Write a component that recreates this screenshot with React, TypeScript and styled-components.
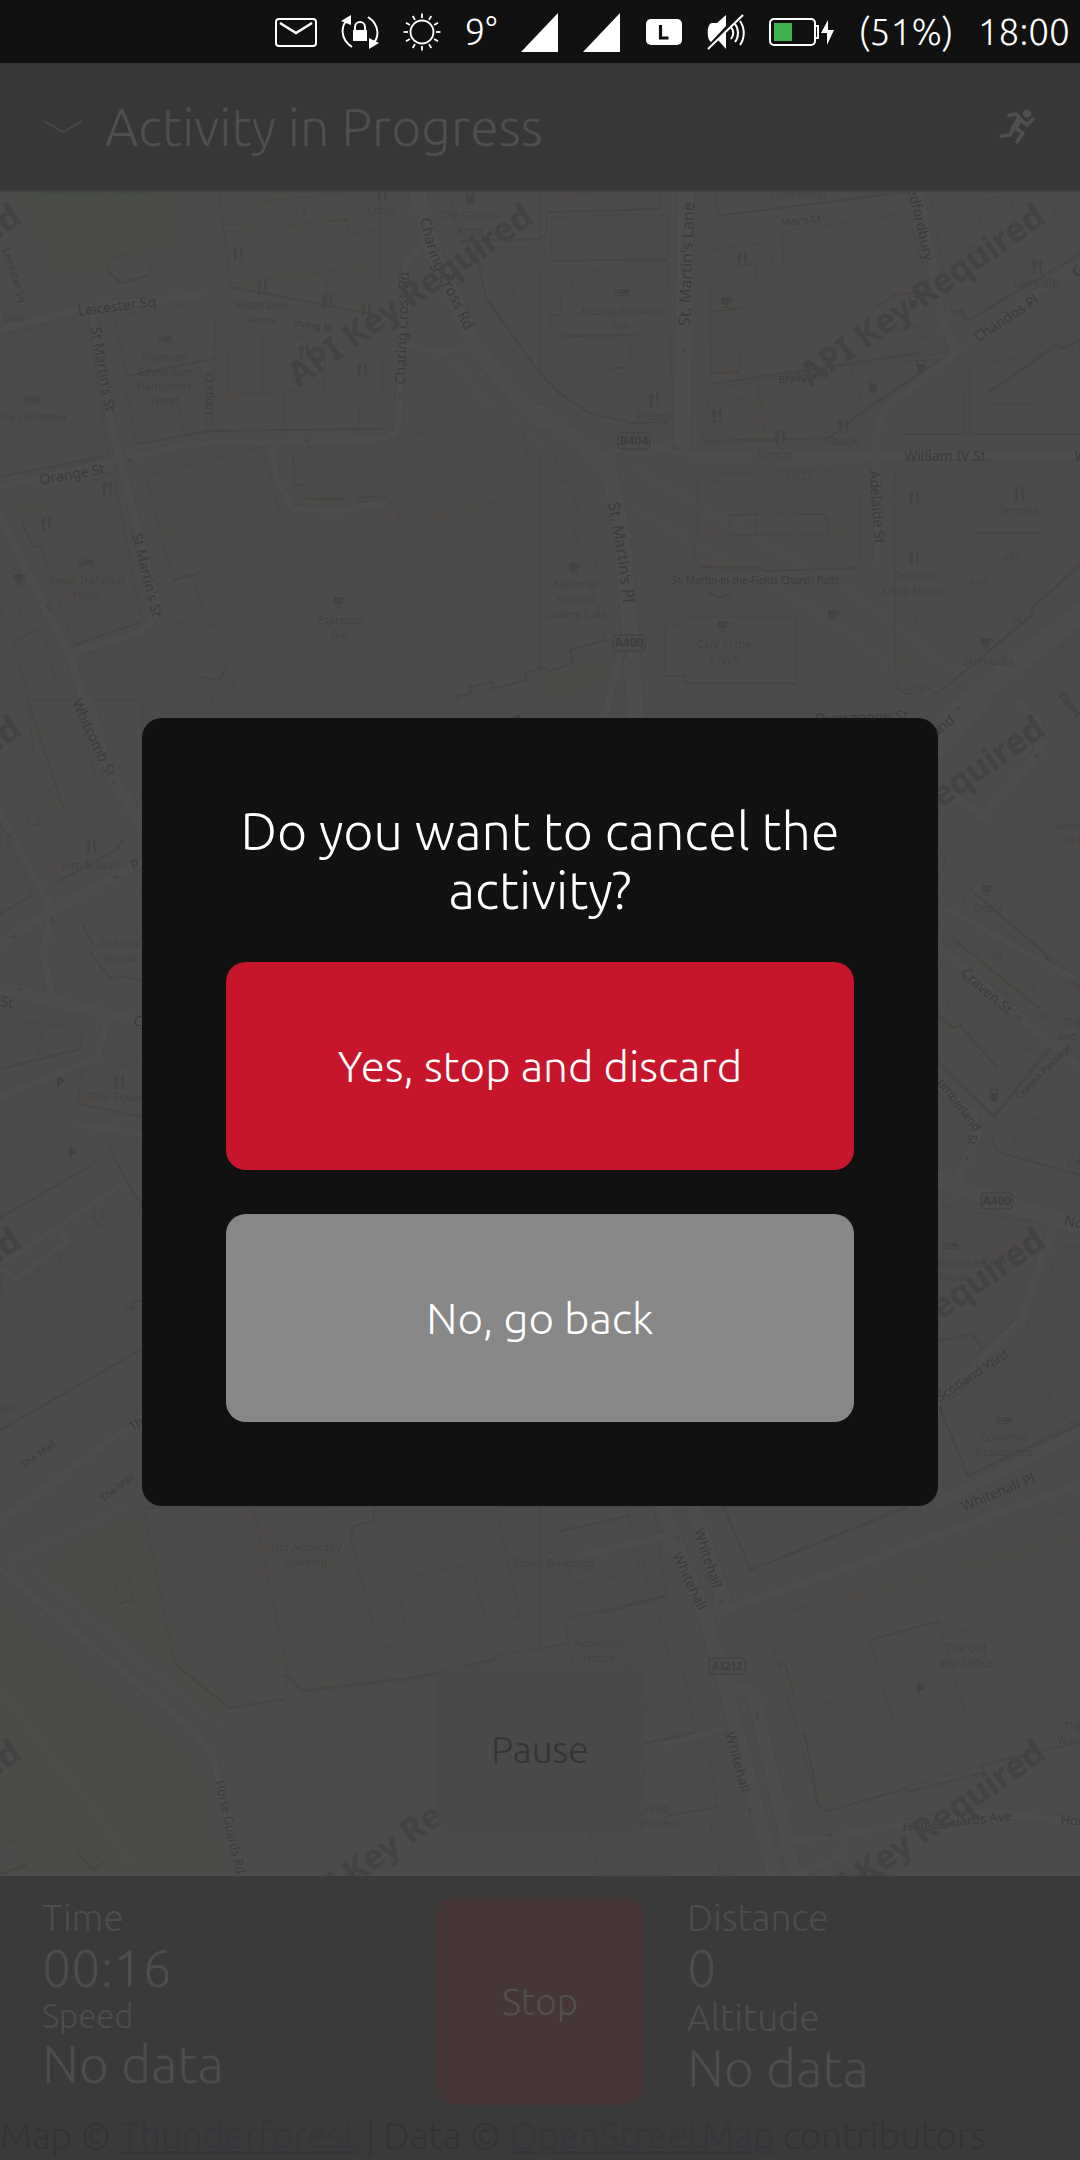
import React from "react";
import styled, { createGlobalStyle } from "styled-components";

const uiFont = `Ubuntu, "Open Sans", "Noto Sans", sans-serif`;

const GlobalStyle = createGlobalStyle`
  * { box-sizing: border-box; }
  body { margin: 0; background: #111; font-family: ${uiFont}; font-weight: 300; }
  button { font: inherit; border: 0; padding: 0; cursor: pointer; }
  h1, h2, p, dl, dt, dd { margin: 0; font-weight: inherit; }
`;

/* ---------- layout ---------- */

const Screen = styled.div`
  min-height: 100vh;
  display: flex;
  flex-direction: column;
  background: #4b4b4b;
`;

const StatusBar = styled.header`
  height: 63px;
  flex: none;
  display: flex;
  align-items: center;
  justify-content: flex-end;
  gap: 24px;
  padding-right: 10px;
  background: #111;
  color: #fff;
  font-size: 37px;
  line-height: 42px;
`;

const Page = styled.div`
  position: relative;
  flex: 1;
  display: flex;
  flex-direction: column;
`;

const TitleBar = styled.div`
  height: 129px;
  flex: none;
  display: flex;
  align-items: center;
  gap: 22px;
  padding: 0 43px;
  background: #373737;
  border-bottom: 2px solid #404040;
  color: #4f4f4f;
`;

const Title = styled.h1`
  flex: 1;
  font-size: 52px;
  line-height: 58px;
`;

const IconButton = styled.button`
  display: flex;
  background: none;
  color: #4f4f4f;
`;

const MapArea = styled.main`
  position: relative;
  flex: 1;
  display: flex;
  flex-direction: column;
  justify-content: flex-end;
  overflow: hidden;
`;

const MapCanvas = styled.svg`
  position: absolute;
  inset: 0;
  width: 100%;
  height: 100%;
`;

const PauseRow = styled.div`
  position: relative;
  display: flex;
  justify-content: center;
  padding-bottom: 43px;
`;

const RoundedButton = styled.button<{ $bg: string; $fg: string; $w: string; $h: number; $size: number }>`
  width: ${(p) => p.$w};
  height: ${(p) => p.$h}px;
  border-radius: 20px;
  background: ${(p) => p.$bg};
  color: ${(p) => p.$fg};
  font-size: ${(p) => p.$size}px;
`;

const StatsPanel = styled.section`
  position: relative;
  background: rgba(56, 56, 56, 0.9);
`;

const StatsGrid = styled.div`
  display: grid;
  grid-template-columns: 1fr 208px 1fr;
  gap: 43px;
  padding: 21px 42px 0;
  height: 229px;
`;

const Stats = styled.dl`
  color: #4d4d4d;
  white-space: nowrap;
`;

const StatName = styled.dt<{ $compact?: boolean }>`
  font-size: ${(p) => (p.$compact ? 33 : 37)}px;
  line-height: ${(p) => (p.$compact ? 38 : 42)}px;
`;

const StatValue = styled.dd`
  font-size: 52px;
  line-height: 58px;
`;

const Attribution = styled.p`
  height: 55px;
  padding: 10px 0 0;
  font-size: 37px;
  line-height: 42px;
  white-space: nowrap;
  color: #333;
`;

const Link = styled.a`
  color: #35353c;
`;

const Overlay = styled.div`
  position: absolute;
  inset: 0;
  display: flex;
  align-items: center;
  justify-content: center;
  padding: 0 142px;
`;

const Dialog = styled.section`
  width: 100%;
  display: flex;
  flex-direction: column;
  padding: 84px;
  border-radius: 20px;
  background: #111;
  color: #fff;
`;

const Question = styled.h2`
  font-size: 52px;
  line-height: 59px;
  text-align: center;
  margin-bottom: 42px;
`;

const Choices = styled.div`
  display: flex;
  flex-direction: column;
  gap: 44px;
`;

/* ---------- status icons ---------- */

const MailIcon = () => (
  <svg width="42" height="32" viewBox="0 0 42 32" fill="none" stroke="#fff" strokeWidth="2">
    <rect x="1" y="3" width="40" height="27" rx="3" />
    <path d="M5 7l16 10L37 7" strokeWidth="2.6" />
  </svg>
);
const RotationLockIcon = () => (
  <svg width="38" height="36" viewBox="0 0 38 36" fill="none" stroke="#fff" strokeWidth="2">
    <path d="M11 33C-1 25-1 11 8 5M27 3c12 8 12 22 3 28" />
    <path d="M0 7L10 1v10zM38 29l-10 6V24z" fill="#fff" stroke="none" />
    <rect x="12" y="16" width="14" height="11" fill="#fff" stroke="none" />
    <path d="M14 16v-3a5 5 0 0 1 10 0v3" />
  </svg>
);
const SunIcon = () => (
  <svg width="38" height="38" viewBox="0 0 38 38" fill="none" stroke="#fff" strokeWidth="1.8">
    <circle cx="19" cy="19" r="11.5" />
    {Array.from({ length: 12 }, (_, i) => (
      <path key={i} d="M19 0.500v4.500" transform={`rotate(${i * 30} 19 19)`} />
    ))}
  </svg>
);
const SignalIcon = () => (
  <svg width="38" height="40" viewBox="0 0 38 40">
    <path d="M0 40L37 1v39z" fill="#fff" />
  </svg>
);
const NetworkIcon = () => (
  <svg width="38" height="28" viewBox="0 0 38 28">
    <rect x="1" y="1" width="36" height="26" rx="5" fill="#fff" />
    <path d="M15.500 7v13h8" fill="none" stroke="#111" strokeWidth="3.200" />
  </svg>
);
const MuteIcon = () => (
  <svg width="38" height="36" viewBox="0 0 38 36" fill="none" stroke="#fff" strokeWidth="2">
    <path d="M19 1v11L4 28c-5-3-4-19 1-19h5zM11 26l8-9v18z" fill="#fff" stroke="none" />
    <path d="M1 35L36 1M24 13c3 4 3 8 0 12M28 10c4 5 4 13 0 18M33 7c5 7 5 17 0 24" />
  </svg>
);
const BatteryIcon = () => (
  <svg width="65" height="30" viewBox="0 0 65 30">
    <rect x="1" y="2" width="45" height="26" rx="4" fill="none" stroke="#fff" strokeWidth="2" />
    <rect x="5" y="6" width="18" height="18" fill="#3fb24f" />
    <path d="M46 9h3v12h-3" fill="none" stroke="#fff" strokeWidth="2" />
    <path d="M59 3l-7 13h6l0 12 7-15h-6z" fill="#fff" />
  </svg>
);

/* ---------- map data ---------- */

type Tile = { x: number; y: number; w: number; h: number };
const NW: Tile = { x: 0, y: 190, w: 2.904, h: 2.958 };
const NE: Tile = { x: 540, y: 190, w: 2.904, h: 2.958 };
const W: Tile = { x: 0, y: 700, w: 3, h: 1.912 };
const E: Tile = { x: 840, y: 700, w: 3, h: 1.912 };
const SW: Tile = { x: 0, y: 1480, w: 2.904, h: 2.306 };
const SE: Tile = { x: 540, y: 1480, w: 2.904, h: 2.306 };

const project = (t: Tile, x: number, y: number): [number, number] => [
  Math.round(t.x + x / t.w),
  Math.round(t.y + y / t.h),
];
const points = (t: Tile, s: string) =>
  s
    .split(" ")
    .map((p) => {
      const [x, y] = p.split(",").map(Number);
      return project(t, x, y).join(",");
    })
    .join(" ");

const parks: [Tile, string][] = [
  [NW, "45,5 150,235 240,255 330,240 400,185 510,160 525,80 510,5"],
  [NW, "10,940 130,918 125,945 35,975"],
  [NE, "0,1440 190,1395 170,1470 0,1510"],
  [SW, "110,200 370,80 410,100 500,420 660,520 640,560 470,420"],
  [SW, "0,285 300,480 500,600 580,670 650,912 660,1568 0,1568"],
];

const buildings: [Tile, string][] = [
  [NW, "635,5 1100,5 1110,372 670,288"],
  [NW, "315,205 405,180 438,215 435,250 350,275 312,235"],
  [NW, "335,385 350,370 555,335 628,383 618,500 370,550"],
  [NW, "362,580 585,525 605,715 398,750"],
  [NW, "628,383 890,440 1112,492 1105,708 615,710"],
  [NW, "0,430 255,372 315,785 0,850"],
  [NW, "65,985 320,835 332,850 412,1275 215,1345 120,1055 98,1055"],
  [NW, "425,845 760,760 820,975 875,965 850,785 1075,770 1080,785 1110,785 1110,755 1165,735 1460,662 1475,720 1515,712 1535,800 1568,795 1568,1420 1525,1430 1530,1450 1430,1475 1425,1455 1365,1470 1370,1490 1325,1500 1335,1568 700,1568 665,1490 685,1485 645,1355 625,1285 600,1290 565,1160 583,1150 580,1132 503,1155"],
  [NW, "1305,5 1568,5 1568,145 1335,150"],
  [NW, "1380,170 1543,170 1568,240 1568,545 1410,320"],
  [NW, "1245,400 1270,375 1295,400 1290,425 1268,432"],
  [NW, "40,1335 125,1295 190,1568 100,1568"],
  [NW, "230,1380 530,1275 570,1370 590,1440 640,1568 290,1568"],
  [NW, "0,1140 50,1120 110,1200 125,1290 40,1335 0,1240"],
  [NE, "0,5 350,5 352,55 20,65 18,140 0,140"],
  [NE, "32,80 368,72 370,205 35,210"],
  [NE, "60,310 97,305 97,258 145,240 258,235 255,210 372,210 385,680 265,690 145,660 60,600 0,540 0,430 30,430 28,370 60,370"],
  [NE, "510,5 1060,5 518,78"],
  [NE, "492,178 663,155 680,240 710,235 703,125 1070,68 1185,480 870,515 500,575"],
  [NE, "498,590 870,520 1165,500 960,645 840,735 480,750 470,740"],
  [NE, "1130,5 1568,5 1568,190 1240,388 1225,355 1195,360"],
  [NE, "1250,515 1450,490 1500,455 1515,470 1568,450 1568,722 1250,722"],
  [NE, "1058,640 1110,610 1200,555 1232,600 1232,722 1058,722"],
  [NE, "460,840 935,825 930,1010 925,1118 650,1128 465,1115 448,1090 450,1025 460,1020"],
  [NE, "362,1287 420,1285 420,1262 747,1262 747,1460 420,1460 420,1437 362,1437"],
  [NE, "492,1170 555,1170 555,1195 525,1208 492,1195"],
  [NE, "0,790 40,785 62,865 90,865 120,990 100,995 110,1050 160,1085 162,1120 145,1150 192,1330 88,1362 95,1400 28,1422 0,1412"],
  [NE, "1035,835 1568,835 1568,1110 1480,1190 1425,1235 1430,1260 1185,1465 1150,1490 1120,1465 1090,1490 1060,1490 1033,1470 1028,890"],
  [NE, "1500,1395 1568,1330 1568,1480"],
  [W, "85,0 225,0 300,180 370,265 350,285 168,350 0,160 0,120 100,100"],
  [W, "0,235 95,375 0,410"],
  [W, "280,0 426,0 426,190 335,110"],
  [W, "250,430 426,360 426,535 370,530 330,532 270,480 280,465"],
  [W, "0,612 247,625 240,668 0,705"],
  [W, "245,705 426,695 426,798 235,772"],
  [W, "10,855 95,820 110,835 215,800 285,885 0,990 0,905 42,890"],
  [W, "325,855 426,838 426,970"],
  [W, "10,1140 250,1035 275,1010 335,970 360,990 426,975 426,1240 0,1395 0,1090"],
  [E, "390,362 560,230 720,120 720,555 690,520"],
  [E, "320,465 375,405 400,390 720,560 720,660 330,490"],
  [E, "295,500 640,650 460,798 295,690"],
  [E, "460,830 700,690 720,680 720,908 475,865 455,850"],
  [E, "295,965 640,1005 530,1180 430,1243 395,1210 295,1228"],
  [E, "720,1045 680,1045 655,1060 535,1240 690,1385 720,1380"],
  [E, "300,1350 530,1255 690,1385 385,1483"],
  [E, "295,280 315,300 315,320 295,338"],
  [E, "295,380 340,350 375,380 370,400 295,435"],
  [SW, "415,65 1090,60 1085,95 1025,105 1018,135 1100,390 1187,373 1158,260 1180,225 1340,198 1375,210 1410,330 1510,315 1440,62 1568,62 1568,385 1440,405 1435,418 1215,458 1010,478 890,488 835,450 828,505 665,525 505,422"],
  [SW, "328,220 370,210 387,275 345,285"],
  [SW, "0,840 50,830 75,890 0,908"],
  [SW, "225,858 250,830 300,880 270,900"],
  [SE, "0,62 330,62 365,265 315,275 70,320 85,375 0,390"],
  [SE, "70,320 335,280 375,410 415,430 450,580 300,608 300,428 100,428"],
  [SE, "305,665 475,600 495,640 515,755 365,775 370,820 325,825 350,870 365,912 170,912 145,815 290,812"],
  [SE, "530,60 1060,60 612,208"],
  [SE, "660,330 690,310 1568,60 1568,605 1285,658 1060,710 835,765 808,750"],
  [SE, "498,788 525,782 530,818 500,825"],
  [SE, "520,880 548,875 558,912 520,912"],
  [SE, "895,900 1020,880 1030,912 895,912"],
];

const courtyards: [Tile, string][] = [
  [NE, "65,432 260,432 262,565 205,530 130,500"],
  [NE, "1305,600 1480,480 1568,440 1568,635 1308,632"],
  [NE, "553,962 628,958 628,1020 553,1020"],
  [NE, "745,958 822,958 837,980 837,1018 748,1018"],
  [NE, "1265,1015 1450,1015 1300,1132 1265,1115"],
  [NE, "1270,35 1365,15 1380,90 1285,115"],
  [SE, "60,118 258,82 290,210 90,242"],
  [SE, "958,370 1158,325 1248,580 1048,625"],
];

const shadows: [Tile, string][] = [
  [NW, "670,288 1110,372"],
  [NW, "370,550 618,500"],
  [NW, "398,750 605,712 1105,708"],
  [NW, "0,848 312,787"],
  [NW, "65,985 98,1055 118,1052"],
  [NW, "215,1345 410,1277"],
  [NW, "892,915 1000,912"],
  [NW, "1030,912 1110,905"],
  [NW, "852,872 890,872"],
  [NW, "503,1155 582,1132"],
  [NW, "1325,1500 1368,1488 1365,1470 1428,1455 1432,1475 1528,1450 1525,1430 1568,1418"],
  [NW, "1335,150 1568,145"],
  [NW, "1380,170 1410,320 1568,545"],
  [NW, "315,240 350,275 435,250"],
  [NW, "965,92 1008,90"],
  [NW, "585,1440 635,1448 658,1410"],
  [NE, "20,65 352,55"],
  [NE, "35,210 370,203"],
  [NE, "65,432 260,430"],
  [NE, "205,528 260,528"],
  [NE, "0,540 60,605 145,660 265,690 372,685"],
  [NE, "518,78 1060,5"],
  [NE, "495,360 592,350"],
  [NE, "500,540 577,538"],
  [NE, "500,575 870,517 1110,480"],
  [NE, "470,743 840,735 950,645 1165,500"],
  [NE, "1195,360 1225,358 1240,388 1568,190"],
  [NE, "1058,722 1232,722"],
  [NE, "1250,722 1568,722"],
  [NE, "1305,598 1455,490 1500,455 1515,470 1568,448"],
  [NE, "553,962 628,958"],
  [NE, "745,957 822,957 837,978"],
  [NE, "462,1113 645,1118 650,1128 925,1118"],
  [NE, "492,1192 520,1205 555,1195"],
  [NE, "362,1437 420,1437 420,1458 747,1458"],
  [NE, "1265,1015 1448,1015"],
  [NE, "1568,1110 1480,1190 1425,1235 1430,1258 1185,1465 1150,1490 1120,1465"],
  [NE, "1090,1490 1060,1490 1033,1470"],
  [NE, "192,1330 88,1362 95,1400 28,1422 0,1412"],
  [NE, "970,350 1030,312 1120,302"],
  [W, "168,350 350,285 370,265"],
  [W, "0,410 95,375"],
  [W, "85,0 192,212"],
  [W, "250,430 278,468"],
  [W, "268,480 330,532 370,530 426,535"],
  [W, "0,705 240,667"],
  [W, "235,772 426,798"],
  [W, "0,990 285,885"],
  [W, "325,855 426,970"],
  [W, "0,1395 426,1240"],
  [W, "275,985 300,1010"],
  [W, "375,1160 400,1165 400,1150 426,1150"],
  [E, "390,362 620,490 720,555"],
  [E, "335,455 600,590"],
  [E, "295,603 340,628 360,622 475,705"],
  [E, "295,693 462,798 640,660"],
  [E, "458,850 475,865 720,908"],
  [E, "295,1226 395,1212 430,1243 530,1180"],
  [E, "385,1483 720,1385"],
  [E, "295,1345 385,1483"],
  [SW, "505,422 665,525 828,505"],
  [SW, "820,452 835,452 875,487 1010,472 1215,455 1440,412"],
  [SW, "1085,70 1085,95 1025,105 1018,135"],
  [SW, "345,285 387,275"],
  [SW, "225,858 270,900 300,880"],
  [SW, "0,908 75,888"],
  [SE, "58,118 258,82"],
  [SE, "0,390 85,375"],
  [SE, "175,307 365,267"],
  [SE, "300,608 450,580"],
  [SE, "365,775 515,753"],
  [SE, "530,60 612,208 1070,62"],
  [SE, "690,427 712,423 740,505"],
  [SE, "755,585 768,583 790,665 808,750 835,763 1060,712 1065,720 1285,676 1285,658 1568,605"],
  [SE, "958,370 1158,325"],
];

const hairlines: [Tile, string][] = [
  [NW, "640,48 990,10"],
  [NW, "650,125 1010,85 1008,130 1100,118"],
  [NW, "675,278 1110,222"],
  [NW, "948,245 948,335"],
  [NW, "1000,350 1000,278 1110,275"],
  [NW, "668,395 660,602 890,595 1105,640"],
  [NW, "762,412 760,598"],
  [NW, "945,460 943,608"],
  [NW, "828,598 828,705"],
  [NW, "1043,632 1043,705"],
  [NW, "518,610 535,720"],
  [NW, "852,785 852,872 892,915 1150,925 1165,990 1568,890"],
  [NW, "15,1210 85,1205"],
  [NE, "490,235 625,220 630,270"],
  [NE, "495,303 615,297"],
  [NE, "497,465 577,465 577,538"],
  [NE, "500,630 635,612 632,568 655,740"],
  [NE, "485,685 645,672"],
  [NE, "920,430 1055,410 1135,395"],
  [NE, "925,500 920,430"],
  [NE, "1060,440 1145,432"],
  [NE, "900,520 935,630"],
  [NE, "960,510 1005,610"],
  [NE, "995,505 1060,592"],
  [NE, "30,370 375,362"],
  [NE, "262,430 372,422"],
  [NE, "450,1022 925,1018"],
  [NE, "628,958 745,955"],
  [W, "45,195 160,170"],
  [W, "130,622 115,680"],
  [W, "360,390 426,460"],
  [E, "440,610 380,660"],
  [E, "490,635 420,680"],
  [E, "600,835 640,770"],
  [E, "440,445 410,490"],
  [E, "530,495 490,540"],
  [E, "460,1000 440,1040"],
  [SW, "735,62 835,445"],
  [SE, "690,310 1568,130"],
  [SE, "255,65 265,115 285,120 320,270"],
];

const footpaths: [Tile, string][] = [
  [NE, "240,920 560,1110"],
  [NE, "270,820 760,1110"],
  [NE, "680,1170 870,1290 1040,1430"],
  [NE, "880,1170 1200,1420"],
  [NW, "1320,500 1400,620 1568,750"],
  [SW, "0,480 290,780 390,890"],
  [SW, "110,215 420,430 640,560"],
  [SW, "20,190 370,60"],
];

const roads: [Tile, string, number][] = [
  [NW, "0,415 245,350 585,310", 9],
  [NW, "268,370 320,680 350,810 400,1010 455,1230 440,1280 400,1310 205,1370", 9],
  [NW, "0,880 320,805 550,750 1090,740 1150,720 1160,680 1165,460 1175,220 1230,160", 8],
  [NW, "790,755 805,860 850,945 990,950 1115,925", 8],
  [NW, "1210,0 1260,190 1380,460 1480,590 1568,680", 18],
  [NW, "1175,460 1290,480 1370,455", 8],
  [NW, "0,960 100,1170 200,1370 260,1568", 10],
  [NE, "0,660 130,760 200,840 235,1000 260,1300 280,1568", 18],
  [NE, "425,0 412,750", 18],
  [NE, "180,800 260,745 440,780 1568,785", 10],
  [NE, "1100,5 1170,400 1210,480", 10],
  [NE, "1568,210 1210,480 1000,650 975,720 980,1095", 9],
  [NE, "235,1360 185,1568", 9],
  [NE, "1180,1568 1568,1250", 22],
  [W, "260,0 320,130 426,240", 14],
  [W, "0,215 160,405 130,480 155,570", 9],
  [W, "0,465 150,405 426,310", 11],
  [W, "0,550 160,575 426,615", 14],
  [W, "0,760 290,685 320,615", 9],
  [W, "225,810 426,830", 9],
  [W, "10,1090 50,1105 205,1035 180,1010", 8],
  [W, "40,1065 370,925", 7],
  [W, "0,1565 426,1370", 9],
  [E, "295,170 430,220 600,100 590,40 540,10", 12],
  [E, "295,90 430,0", 22],
  [E, "325,400 690,530", 8],
  [E, "295,470 460,560 720,705", 10],
  [E, "295,740 400,790 410,830 355,920", 10],
  [E, "295,915 480,960 720,1005", 18],
  [E, "645,1000 540,1190 295,1340", 11],
  [E, "295,1535 720,1400", 11],
  [SW, "0,95 180,0", 9],
  [SW, "0,205 570,580 620,640 710,930", 9],
  [SE, "355,60 420,200 480,310 540,480 680,912", 16],
  [SE, "440,60 530,270 520,300", 16],
  [SE, "540,300 900,200 1568,10", 10],
  [SE, "570,480 620,490 740,912", 15],
  [SE, "110,175 370,130", 9],
  [SE, "360,610 530,575", 7],
  [SE, "680,870 730,835 1010,800 1300,765 1568,790", 9],
  [SE, "770,905 880,865 890,820", 9],
];

type IconKind = "food" | "bed" | "cup" | "pub" | "arrow";
const icons: [Tile, IconKind, number, number, number?][] = [
  [NW, "food", 1110, 12], [NW, "food", 692, 188], [NW, "food", 762, 290], [NW, "food", 950, 327],
  [NW, "food", 1063, 355], [NW, "food", 884, 478], [NW, "food", 1050, 533], [NW, "food", 312, 885],
  [NW, "food", 135, 988], [NW, "bed", 480, 443], [NW, "bed", 92, 620], [NW, "bed", 254, 1102],
  [NW, "cup", 58, 1152], [NW, "cup", 987, 1220], [NW, "pub", 1366, 22],
  [NW, "arrow", 888, 741, 0], [NW, "arrow", 372, 800, -10], [NW, "arrow", 1161, 610, -90], [NW, "arrow", 140, 1236, -115],
  [NE, "food", 588, 205], [NE, "food", 332, 622], [NE, "food", 515, 668], [NE, "food", 698, 732],
  [NE, "food", 881, 697], [NE, "food", 1442, 227], [NE, "food", 1087, 910], [NE, "food", 1392, 898],
  [NE, "food", 1087, 1090], [NE, "bed", 237, 305], [NE, "cup", 542, 332], [NE, "cup", 103, 1117],
  [NE, "cup", 533, 1290], [NE, "cup", 855, 1258], [NE, "cup", 1299, 1340], [NE, "pub", 1083, 330],
  [NE, "pub", 1105, 520], [NE, "pub", 968, 580],
  [NE, "arrow", 418, 472, 90], [NE, "arrow", 388, 764, 10], [NE, "arrow", 245, 1380, -70], [NE, "arrow", 1515, 1347, 140],
  [W, "food", 274, 282], [W, "food", 358, 730],
  [W, "arrow", 40, 453, -20], [W, "arrow", 348, 338, -20], [W, "arrow", 58, 552, 8], [W, "arrow", 30, 260, -130], [W, "arrow", 155, 423, -100], [W, "arrow", 345, 158, -140],
  [E, "cup", 443, 364], [E, "pub", 463, 756], [E, "bed", 332, 1043], [E, "bed", 493, 1378],
  [E, "arrow", 618, 493, 40], [E, "arrow", 535, 607, 35], [E, "arrow", 380, 876, 110], [E, "arrow", 355, 18, -35], [E, "arrow", 590, 105, 120],
  [SE, "arrow", 400, 137, -110], [SE, "arrow", 525, 280, 75], [SE, "arrow", 630, 545, 75], [SE, "arrow", 610, 760, -105], [SE, "arrow", 838, 818, -8],
];

/* tile, text, x, y, rotation, size, tone */
type Tone = "road" | "poi" | "num" | "shield" | "park";
const labels: [Tile, string, number, number, number, number, Tone][] = [
  [NW, "Shakespeare Fountain", 275, 0, 0, 12, "park"],
  [NW, "Leicester Sq", 45, 250, 72, 10, "road"],
  [NW, "Leicester Sq", 340, 343, -7, 14, "road"],
  [NW, "St Martin's St", 298, 530, 80, 14, "road"],
  [NW, "St Martin's St", 427, 1140, 76, 14, "road"],
  [NW, "Orange St", 208, 840, -10, 14, "road"],
  [NW, "Charing Cross Rd", 1168, 408, -88, 14, "road"],
  [NW, "Irving St", 908, 400, 10, 10, "road"],
  [NW, "Long's Ct", 605, 603, -88, 10, "road"],
  [NW, "28", 683, 95, 0, 11, "num"], [NW, "19", 872, 68, 0, 11, "num"], [NW, "2", 1489, 308, 0, 11, "num"], [NW, "21", 66, 1240, 0, 11, "num"],
  [NW, "Lotus", 1108, 60, 0, 11, "poi"],
  [NW, "The Garrick", 1365, 73, 0, 11, "poi"], [NW, "Arms", 1365, 117, 0, 11, "poi"],
  [NW, "One", 41, 379, 0, 11, "poi"],
  [NW, "Ristorante", 760, 341, 0, 11, "poi"], [NW, "Roma", 760, 385, 0, 11, "poi"],
  [NW, "Radisson", 480, 493, 0, 11, "poi"], [NW, "Edwardian", 480, 537, 0, 11, "poi"],
  [NW, "Hampshire", 480, 581, 0, 11, "poi"], [NW, "Hotel", 480, 625, 0, 11, "poi"],
  [NW, "The Londoner", 92, 671, 0, 11, "poi"],
  [NW, "Royal Trafalgar", 252, 1154, 0, 11, "poi"], [NW, "Hotel", 252, 1197, 0, 11, "poi"],
  [NW, "Espresso", 987, 1272, 0, 11, "poi"], [NW, "Bar", 987, 1315, 0, 11, "poi"],
  [NE, "101", 122, 10, 0, 11, "num"], [NE, "65", 1501, 72, 0, 11, "num"], [NE, "53", 1257, 177, 0, 11, "num"],
  [NE, "7-8", 494, 862, 0, 11, "num"], [NE, "24/28", 752, 847, 0, 11, "num"], [NE, "440", 1370, 1087, 0, 11, "num"],
  [NE, "449", 1272, 1161, 0, 11, "num"], [NE, "3", 1088, 1279, 0, 11, "num"], [NE, "441", 1390, 1272, 0, 11, "num"], [NE, "449", 1088, 1472, 0, 11, "num"],
  [NE, "Lane Hotel", 750, 14, 0, 11, "poi"],
  [NE, "hub by Premier", 235, 358, 0, 11, "poi"], [NE, "Inn", 235, 402, 0, 11, "poi"],
  [NE, "Prezzo", 331, 669, 0, 11, "poi"], [NE, "Bancor", 684, 782, 0, 11, "poi"], [NE, "Hazuki", 881, 743, 0, 11, "poi"],
  [NE, "Lao Café", 1441, 275, 0, 11, "poi"], [NE, "Terroirs", 1391, 948, 0, 11, "poi"],
  [NE, "Tandoor", 1086, 1142, 0, 11, "poi"], [NE, "Chop House", 1086, 1185, 0, 11, "poi"],
  [NE, "National", 105, 1166, 0, 11, "poi"], [NE, "Portrait", 105, 1210, 0, 11, "poi"], [NE, "Gallery Cafe", 105, 1254, 0, 11, "poi"],
  [NE, "Cafe in the", 534, 1342, 0, 11, "poi"], [NE, "Crypt", 534, 1386, 0, 11, "poi"], [NE, "Starbucks", 1300, 1393, 0, 11, "poi"],
  [NE, "St. Martin's Lane", 425, 220, -88, 16, "road"],
  [NE, "May's Ct", 759, 89, -6, 10, "road"], [NE, "Brydges Pl", 765, 551, -8, 10, "road"],
  [NE, "edfordbury", 1105, 100, 77, 14, "road"],
  [NE, "Chandos Pl", 1352, 380, -33, 14, "road"],
  [NE, "William IV St", 1177, 787, 0, 14, "road"],
  [NE, "W", 1572, 787, 0, 14, "road"],
  [NE, "C", 1560, 240, -33, 14, "road"],
  [NE, "Adelaide St", 980, 937, 86, 14, "road"],
  [NE, "St. Martin-in-the-Fields Church Path", 624, 1153, 0, 10, "road"],
  [NE, "Villiers", 1540, 1520, 50, 10, "road"],
  [NE, "Duncannon St", 935, 1560, -2, 14, "road"],
  [NE, "B404", 272, 742, 0, 12, "shield"], [NE, "A400", 258, 1340, 0, 12, "shield"],
  [W, "Whitcomb St", 283, 72, 65, 14, "road"],
  [W, "P", 405, 315, -20, 14, "road"], [W, "St", 20, 578, 8, 14, "road"], [W, "C", 413, 613, 8, 14, "road"],
  [W, "Jom Makan", 272, 316, 0, 11, "poi"], [W, "Oceanic", 361, 465, 0, 11, "poi"], [W, "House", 361, 493, 0, 11, "poi"],
  [W, "Thai Square", 358, 760, 0, 11, "poi"], [W, "Café", 15, 1353, 0, 11, "poi"],
  [W, "1-4", 100, 236, 0, 11, "num"], [W, "5", 339, 255, 0, 11, "num"], [W, "20", 178, 655, 0, 11, "num"],
  [W, "18", 295, 980, 0, 11, "num"], [W, "17", 190, 1073, 0, 11, "num"], [W, "16", 120, 1098, 0, 11, "num"],
  [W, "P", 180, 733, 0, 12, "shield"], [W, "P", 216, 867, 0, 12, "shield"],
  [W, "The Mall", 114, 1442, -37, 10, "road"], [W, "The Mall", 350, 1505, -37, 10, "road"], [W, "The", 418, 1380, -35, 12, "road"],
  [E, "Strand", 285, 60, -36, 14, "road"],
  [E, "Costa", 443, 397, 0, 11, "poi"], [E, "Ambassadors", 750, 240, 0, 11, "poi"], [E, "Church", 730, 268, 0, 11, "poi"],
  [E, "The Ship", 735, 615, 0, 11, "poi"], [E, "and Shovell", 740, 643, 0, 11, "poi"], [E, "City", 710, 884, 0, 11, "poi"],
  [E, "Northumberland", 370, 1077, 0, 11, "poi"], [E, "House", 335, 1104, 0, 11, "poi"],
  [E, "Corinthia", 492, 1410, 0, 11, "poi"], [E, "Residences", 492, 1438, 0, 11, "poi"],
  [E, "42", 359, 465, 0, 11, "num"], [E, "40", 467, 490, 0, 11, "num"], [E, "38", 573, 549, 0, 11, "num"], [E, "36", 606, 605, 0, 11, "num"],
  [E, "10", 333, 578, 0, 11, "num"], [E, "14", 567, 665, 0, 11, "num"], [E, "25", 582, 802, 0, 11, "num"], [E, "25", 534, 843, 0, 11, "num"],
  [E, "Craven St", 440, 557, 41, 14, "road"],
  [E, "Craven Passage", 608, 709, -45, 10, "road"],
  [E, "umberland", 358, 775, 52, 12, "road"], [E, "St", 397, 842, 98, 12, "road"],
  [E, "A400", 470, 957, 0, 12, "shield"], [E, "No", 702, 999, 12, 14, "road"],
  [E, "Scotland Yard", 395, 1290, -33, 13, "road"],
  [E, "Whitehall Pl", 475, 1515, -22, 14, "road"],
  [SW, "Old Admiralty", 890, 155, 0, 11, "poi"], [SW, "Building", 890, 189, 0, 11, "poi"],
  [SW, "Ripley Buildings", 1610, 191, 0, 11, "poi"],
  [SW, "Horse Guards Rd", 668, 800, 77, 12, "road"],
  [SE, "26", 46, 158, 0, 11, "num"], [SE, "57", 1236, 354, 0, 11, "num"], [SE, "57", 838, 522, 0, 11, "num"], [SE, "36", 316, 524, 0, 11, "num"],
  [SE, "Admiralty", 172, 376, 0, 11, "poi"], [SE, "House", 172, 410, 0, 11, "poi"],
  [SE, "The Old", 1236, 388, 0, 11, "poi"], [SE, "War Office", 1236, 422, 0, 11, "poi"],
  [SE, "The Old", 1580, 567, 0, 11, "poi"], [SE, "War Office", 1580, 600, 0, 11, "poi"],
  [SE, "Household", 290, 758, 0, 11, "poi"], [SE, "Cavalry Museum", 290, 792, 0, 11, "poi"],
  [SE, "P", 1104, 481, 0, 12, "shield"], [SE, "A3212", 544, 430, 0, 10, "shield"],
  [SE, "Whitehall", 488, 180, 72, 14, "road"], [SE, "Whitehall", 435, 232, 65, 14, "road"],
  [SE, "Whitehall", 576, 650, 75, 14, "road"],
  [SE, "Horse Guards Ave", 1210, 787, -6, 13, "road"], [SE, "Hor", 1545, 784, 6, 13, "road"],
];

const tones: Record<Tone, string> = {
  road: "#3b3b3b",
  poi: "#424242",
  num: "#454547",
  shield: "#3d3d3d",
  park: "#3f4540",
};

const MapIcon = ({ kind }: { kind: IconKind }) => {
  switch (kind) {
    case "food":
      return <path d="M-5-7v4q0 2 1.300 2.300V7h2V-.7Q-.4-1-.4-3v-4h-.9v3.500h-.9V-7h-1v3.500h-.9V-7zM2-5.500Q2.500-7.500 4.500-7.500V7H3.200V1H2z" />;
    case "bed":
      return <path d="M-7.500-5h1v7h14v3h-1V3h-13v2h-1zM-5.500 1v-2h3v2zM-5.500-3.500h2v2h-2zM-2-3.500h7.500q2 0 2 2V1H-2z" />;
    case "cup":
      return <path fillRule="evenodd" d="M-6-5H2.500v1H4q2 0 2 2T4 0H2.400Q2 3 0 3h-3q-3 0-3-4zM2.500-3V-1H4q1 0 1-1T4-3zM-5 4.500h8v1h-8z" />;
    case "pub":
      return <path fillRule="evenodd" d="M-4.500-6h9L4 2 3 6.500h-6L-4 2zM-3.300-5l.3 3h6l.3-3z" />;
    default:
      return <path d="M-4-.6h4V-2.500L4 0 0 2.500V.6h-4z" opacity=".7" />;
  }
};

const watermarkRows = [388, 900, 1412, 1924];
const watermarkColumns = [-214, 298, 810];

const StreetMap = () => (
  <MapCanvas viewBox="0 192 1080 1968" preserveAspectRatio="xMidYMin slice" role="img" aria-label="Street map">
    <rect x="0" y="192" width="1080" height="1968" fill="#4b4b4b" />
    {parks.map(([t, s], i) => <polygon key={i} points={points(t, s)} fill="#4a4c48" />)}
    <g fill="#4d4b49" stroke="#494745" strokeWidth="1">
      {buildings.map(([t, s], i) => <polygon key={i} points={points(t, s)} />)}
    </g>
    {courtyards.map(([t, s], i) => <polygon key={i} points={points(t, s)} fill="#4b4b4b" stroke="#494745" />)}
    <g fill="none" stroke="#494745" strokeWidth="1">
      {hairlines.map(([t, s], i) => <polyline key={i} points={points(t, s)} />)}
    </g>
    <g fill="none" stroke="#474543" strokeWidth="2">
      {shadows.map(([t, s], i) => <polyline key={i} points={points(t, s)} />)}
    </g>
    <g fill="none" stroke="#494949" strokeLinejoin="round" strokeLinecap="round">
      {roads.map(([t, s, w], i) => <polyline key={i} points={points(t, s)} strokeWidth={w + 1} />)}
    </g>
    <g fill="none" stroke="#4d4d4d" strokeLinejoin="round" strokeLinecap="round">
      {roads.map(([t, s, w], i) => <polyline key={i} points={points(t, s)} strokeWidth={w - 1} />)}
    </g>
    <g fill="none" stroke="#4f4e4e" strokeWidth="1" strokeDasharray="4 4">
      {footpaths.map(([t, s], i) => <polyline key={i} points={points(t, s)} />)}
    </g>
    <g fill="#424240">
      {icons.map(([t, kind, x, y, r = 0], i) => (
        <g key={i} transform={`translate(${project(t, x, y).join(" ")}) rotate(${r})`}>
          <MapIcon kind={kind} />
        </g>
      ))}
    </g>
    <g fontFamily="'Noto Sans', sans-serif" fontWeight="400" textAnchor="middle">
      {labels.map(([t, text, x, y, r, size, tone], i) => {
        const [px, py] = project(t, x, y);
        const half = text.length > 4 ? 18 : 16;
        return (
          <g key={i} transform={`translate(${px} ${py}) rotate(${r})`}>
            {tone === "shield" && text.length > 1 && (
              <rect x={-half} y="-8" width={half * 2} height="16" rx="4" fill="#4b4b4b" stroke="#3e3e3e" />
            )}
            <text
              y={Math.round(size * 0.36)}
              fontSize={size}
              fill={tones[tone]}
              fontWeight={tone === "shield" ? 700 : 400}
              fontStyle={tone === "park" ? "italic" : "normal"}
            >
              {text}
            </text>
          </g>
        );
      })}
      <path id="charing-cross" d="M420 219Q429 262 446 291Q462 325 476 350" fill="none" />
      <text fontSize="15" fill={tones.road} textAnchor="start">
        <textPath href="#charing-cross">Charing Cross Rd</textPath>
      </text>
      <path id="st-martins-place" d="M608 503Q616 545 620 580Q624 600 626 640" fill="none" />
      <text fontSize="16" fill={tones.road} textAnchor="start">
        <textPath href="#st-martins-place">St. Martin's Pl</textPath>
      </text>
    </g>
    <g fontFamily="'Noto Sans', sans-serif" fontWeight="700" fontSize="34" fill="#424242">
      {watermarkRows.map((y) =>
        watermarkColumns.map((x) => (
          <text key={`${x}-${y}`} transform={`translate(${x} ${y}) rotate(-35)`}>
            API Key Required
          </text>
        )),
      )}
    </g>
  </MapCanvas>
);

/* ---------- screen ---------- */

export default function App() {
  return (
    <Screen>
      <GlobalStyle />
      <StatusBar>
        <MailIcon />
        <RotationLockIcon />
        <SunIcon />
        <span>9°</span>
        <SignalIcon />
        <SignalIcon />
        <NetworkIcon />
        <MuteIcon />
        <BatteryIcon />
        <span>(51%)</span>
        <span>18:00</span>
      </StatusBar>
      <Page>
        <TitleBar>
          <IconButton aria-label="Collapse">
            <svg width="40" height="14" viewBox="0 0 40 14" fill="none" stroke="#494949" strokeWidth="2">
              <path d="M1 1l19 11L39 1" />
            </svg>
          </IconButton>
          <Title>Activity in Progress</Title>
          <IconButton aria-label="Activity type">
            <svg width="40" height="36" viewBox="0 0 40 36" fill="none" stroke="currentColor" strokeWidth="3.600" strokeLinecap="round" strokeLinejoin="round">
              <circle cx="30" cy="4.500" r="4.200" fill="currentColor" stroke="none" />
              <path d="M12 6.500L19 5l4 4M16 20l-3 6-9 1M18 19l8 5-6 8.500M24 11l6 5 6-6" />
              <path d="M22 11l-5 8" strokeWidth="6.500" />
            </svg>
          </IconButton>
        </TitleBar>
        <MapArea>
          <StreetMap />
          <PauseRow>
            <RoundedButton $bg="#494949" $fg="#343434" $w="208px" $h={167} $size={37}>Pause</RoundedButton>
          </PauseRow>
          <StatsPanel>
            <StatsGrid>
              <Stats>
                <StatName>Time</StatName>
                <StatValue>00:16</StatValue>
                <StatName $compact>Speed</StatName>
                <StatValue>No data</StatValue>
              </Stats>
              <RoundedButton $bg="#463638" $fg="#525050" $w="208px" $h={208} $size={37}>Stop</RoundedButton>
              <Stats>
                <StatName>Distance</StatName>
                <StatValue>0</StatValue>
                <StatName>Altitude</StatName>
                <StatValue>No data</StatValue>
              </Stats>
            </StatsGrid>
            <Attribution>
              Map © <Link href="#thunderforest">Thunderforest</Link> | Data ©{" "}
              <Link href="#openstreetmap">OpenStreetMap</Link> contributors
            </Attribution>
          </StatsPanel>
        </MapArea>
        <Overlay>
          <Dialog role="dialog" aria-modal="true" aria-labelledby="cancel-question">
            <Question id="cancel-question">Do you want to cancel the activity?</Question>
            <Choices>
              <RoundedButton $bg="#c7162b" $fg="#fff" $w="100%" $h={208} $size={44}>Yes, stop and discard</RoundedButton>
              <RoundedButton $bg="#888" $fg="#fff" $w="100%" $h={208} $size={44}>No, go back</RoundedButton>
            </Choices>
          </Dialog>
        </Overlay>
      </Page>
    </Screen>
  );
}
